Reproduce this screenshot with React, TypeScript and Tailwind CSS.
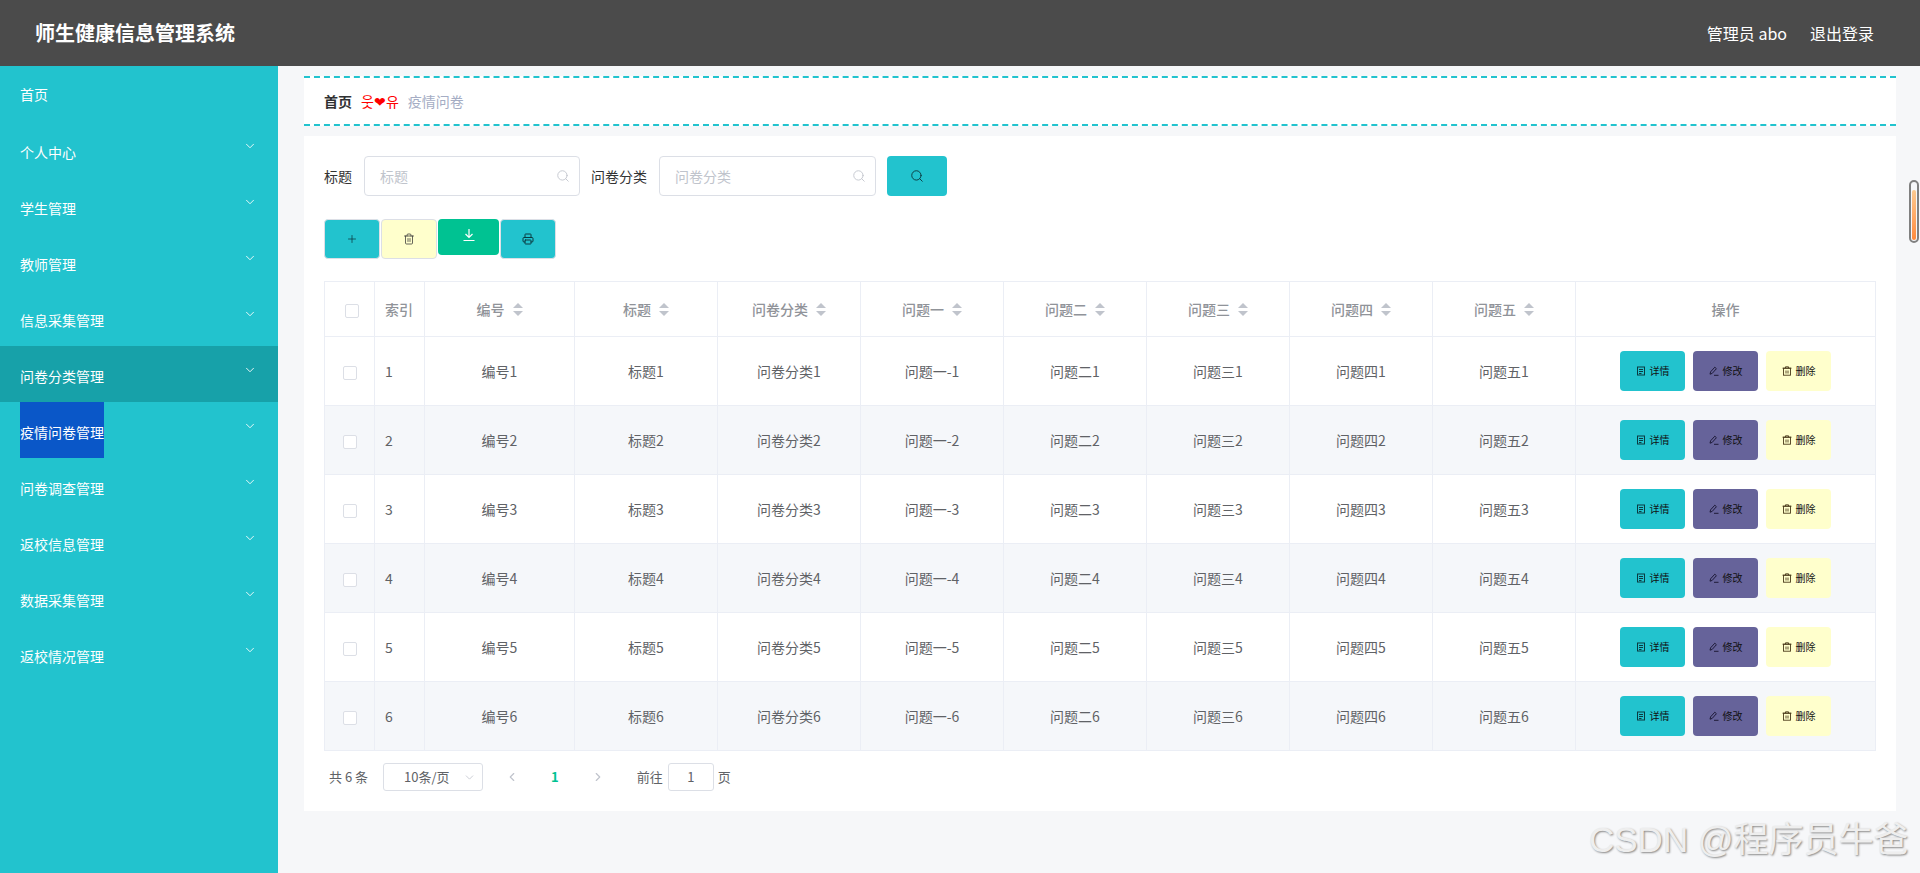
import React from "react";
import { ChevronDown, ChevronLeft, ChevronRight, Plus, Printer, Search, Trash2 } from "lucide-react";

const menu = ["个人中心", "学生管理", "教师管理", "信息采集管理", "问卷分类管理", "疫情问卷管理", "问卷调查管理", "返校信息管理", "数据采集管理", "返校情况管理"];
const heads = ["编号", "标题", "问卷分类", "问题一", "问题二", "问题三", "问题四", "问题五"];
const cells = ["编号", "标题", "问卷分类", "问题一-", "问题二", "问题三", "问题四", "问题五"];
const rows = [1, 2, 3, 4, 5, 6];

function Caret() {
  return (
    <svg viewBox="0 0 10 13" className="ml-[8px] h-[13px] w-[10px] shrink-0" fill="#c0c4cc">
      <path d="M5 0 10 5H0Z" />
      <path d="M5 13 0 8h10Z" />
    </svg>
  );
}

function DocIcon() {
  return (
    <svg viewBox="0 0 10 10" className="h-[10px] w-[10px]" fill="none" stroke="#0b3a40" strokeWidth="1">
      <rect x="1.5" y="1" width="7" height="8" />
      <path d="M3 3.5h4M3 5.5h4M3 7.5h2.5" />
    </svg>
  );
}

function EditIcon() {
  return (
    <svg viewBox="0 0 10 10" className="h-[10px] w-[10px]" fill="none" stroke="#16132e" strokeWidth="0.9">
      <path d="M1 8.2 1.6 5.8 5.8 1.2 7.4 2.7 3.2 7.4Z" />
      <path d="M5 9.3h4.5" />
    </svg>
  );
}

function BinIcon() {
  return (
    <svg viewBox="0 0 10 10" className="h-[10px] w-[10px]" fill="none" stroke="#4a3a1a" strokeWidth="0.9">
      <rect x="1.5" y="2.2" width="7" height="7" />
      <path d="M0.5 2.2h9M3.5 2.2V0.8h3v1.4M4 4.5v3M6 4.5v3" />
    </svg>
  );
}

function RowButton({ bg, icon, label }: { bg: string; icon: React.ReactNode; label: string }) {
  return (
    <button className={`flex h-[40px] w-[65px] items-center justify-center gap-[4px] rounded-[4px] text-[10px] leading-none text-[#111] ${bg}`}>
      {icon}
      <span>{label}</span>
    </button>
  );
}

function Field({ placeholder, width }: { placeholder: string; width: string }) {
  return (
    <div className={`flex h-[40px] items-center justify-between rounded-[4px] border border-[#dcdfe6] bg-white pl-[15px] pr-[9px] ${width}`}>
      <span className="text-[14px] text-[#c0c4cc]">{placeholder}</span>
      <Search size={14} strokeWidth={1.5} color="#c0c4cc" />
    </div>
  );
}

export default function App() {
  return (
    <div className="relative flex h-[873px] w-full flex-col overflow-hidden bg-[#f6f7f9] font-['Noto_Sans_CJK_SC','Noto_Sans',sans-serif]">
      <header className="flex h-[66px] shrink-0 items-center justify-between bg-[#4b4b4b] pl-[35px] pr-[46px] text-white">
        <div className="text-[20px] font-bold">师生健康信息管理系统</div>
        <div className="flex items-center gap-[23px] text-[16px]">
          <span>管理员 abo</span>
          <span>退出登录</span>
        </div>
      </header>
      <div className="flex min-h-0 flex-1">
        <aside className="w-[278px] shrink-0 bg-[#22c3ce] text-[14px] text-white">
          <div className="flex h-[56px] items-center pl-[20px]">首页</div>
          {menu.map((m, i) => (
            <div key={m} className={`flex h-[56px] items-center justify-between pl-[20px] pr-[21px] ${i === 4 ? "bg-[#17a1a9]" : ""}`}>
              <span className={`flex h-[56px] items-center pt-[5px] ${i === 5 ? "bg-[#0a57c8]" : ""}`}>{m}</span>
              <ChevronDown size={14} strokeWidth={1.5} className="mb-[9px]" />
            </div>
          ))}
        </aside>
        <main className="min-w-0 flex-1 pl-[26px] pr-[24px] pt-[10px]">
          <div className="flex h-[50px] items-center gap-[9px] border-y-2 border-dashed border-[#22c3ce] bg-white pl-[20px] text-[14px]">
            <span className="font-bold text-[#303133]">首页</span>
            <span className="text-[#ff0000]">웃❤유</span>
            <span className="text-[#a5adc4]">疫情问卷</span>
          </div>
          <section className="mt-[10px] h-[675px] bg-white px-[20px] pt-[20px]">
            <div className="flex items-center text-[14px] text-[#333]">
              <span className="mr-[12px]">标题</span>
              <Field placeholder="标题" width="w-[216px]" />
              <span className="ml-[11px] mr-[12px]">问卷分类</span>
              <Field placeholder="问卷分类" width="w-[217px]" />
              <button className="ml-[11px] flex h-[40px] w-[60px] items-center justify-center rounded-[4px] bg-[#22c3ce]">
                <Search size={14} strokeWidth={1.6} color="#0b3a40" />
              </button>
            </div>
            <div className="mt-[23px] flex items-start gap-[1px]">
              <button className="flex h-[40px] w-[56px] items-center justify-center rounded-[4px] border border-[#dcdfe6] bg-[#22c3ce]">
                <Plus size={12} strokeWidth={1.5} color="#0b3a40" />
              </button>
              <button className="flex h-[40px] w-[56px] items-center justify-center rounded-[4px] border border-[#dcdfe6] bg-[#ffffcc]">
                <Trash2 size={12} strokeWidth={1.5} color="#333" />
              </button>
              <button className="flex h-[36px] w-[61px] items-center justify-center rounded-[4px] bg-[#00c292] pb-[4px]">
                <svg viewBox="0 0 14 14" className="h-[14px] w-[14px]" fill="none" stroke="#fff" strokeWidth="1.2">
                  <path d="M7 1v8M3.5 6 7 9.5 10.500 6M1.500 12.500h11" />
                </svg>
              </button>
              <button className="flex h-[40px] w-[56px] items-center justify-center rounded-[4px] border border-[#dcdfe6] bg-[#22c3ce]">
                <Printer size={12} strokeWidth={2} color="#0b3a40" />
              </button>
            </div>
            <table className="mt-[22px] w-[1552px] table-fixed border-collapse text-[14px] text-[#606266]">
              <colgroup>
                <col className="w-[50px]" />
                <col className="w-[50px]" />
                <col className="w-[150px]" />
                {heads.slice(1).map((h) => (
                  <col key={h} className="w-[143px]" />
                ))}
                <col />
              </colgroup>
              <thead>
                <tr className="h-[55px] text-[#909399]">
                  <th className="border border-[#ebeef5] p-0">
                    <span className="ml-[4px] inline-block h-[14px] w-[14px] rounded-[2px] border border-[#dcdfe6] bg-white align-middle" />
                  </th>
                  <th className="border border-[#ebeef5] pl-[10px] text-left font-medium">索引</th>
                  {heads.map((h) => (
                    <th key={h} className="border border-[#ebeef5] p-0 font-medium">
                      <span className="flex items-center justify-center">
                        {h}
                        <Caret />
                      </span>
                    </th>
                  ))}
                  <th className="border border-[#ebeef5] font-medium">操作</th>
                </tr>
              </thead>
              <tbody>
                {rows.map((r) => (
                  <tr key={r} className={`h-[69px] ${r % 2 === 0 ? "bg-[#f5f7fa]" : "bg-white"}`}>
                    <td className="border border-[#ebeef5] p-0 text-center">
                      <span className="inline-block h-[14px] w-[14px] rounded-[2px] border border-[#dcdfe6] bg-white align-middle" />
                    </td>
                    <td className="border border-[#ebeef5] pl-[10px]">{r}</td>
                    {cells.map((c) => (
                      <td key={c} className="border border-[#ebeef5] p-0 text-center">
                        {c}
                        {r}
                      </td>
                    ))}
                    <td className="border border-[#ebeef5] p-0">
                      <div className="flex justify-center gap-[8px]">
                        <RowButton bg="bg-[#22c3ce]" icon={<DocIcon />} label="详情" />
                        <RowButton bg="bg-[#66639a]" icon={<EditIcon />} label="修改" />
                        <RowButton bg="bg-[#ffffcc]" icon={<BinIcon />} label="删除" />
                      </div>
                    </td>
                  </tr>
                ))}
              </tbody>
            </table>
            <div className="mt-[12px] flex h-[28px] items-center text-[13px] text-[#606266]">
              <span className="ml-[5px]">共 6 条</span>
              <div className="ml-[15px] flex h-[28px] w-[100px] items-center justify-between rounded-[3px] border border-[#dcdfe6] pl-[20px] pr-[6px]">
                <span>10条/页</span>
                <ChevronDown size={13} strokeWidth={1.5} color="#c0c4cc" />
              </div>
              <ChevronLeft size={14} strokeWidth={2} color="#c0c4cc" className="ml-[22px]" />
              <span className="ml-[32px] font-bold text-[#00c292]">1</span>
              <ChevronRight size={14} strokeWidth={2} color="#c0c4cc" className="ml-[32px]" />
              <span className="ml-[32px]">前往</span>
              <div className="ml-[5px] flex h-[28px] w-[46px] items-center justify-center rounded-[3px] border border-[#dcdfe6]">1</div>
              <span className="ml-[4px]">页</span>
            </div>
          </section>
        </main>
      </div>
      <div className="absolute right-[1px] top-[180px] h-[63px] w-[10px] rounded-full border-2 border-[#808080] bg-[#f6f7f9] p-[1px] pt-[8px]">
        <div className="h-full w-full rounded-full bg-gradient-to-b from-[#fcc98f] to-[#ff8a3c]" />
      </div>
      <div className="absolute left-[1589px] top-[815px] whitespace-nowrap text-[35px] leading-[50px] text-[#eeeeee] font-['Liberation_Sans','Noto_Sans_CJK_SC',sans-serif] [text-shadow:1px_1px_2px_#888]">
        CSDN @程序员牛爸
      </div>
    </div>
  );
}
